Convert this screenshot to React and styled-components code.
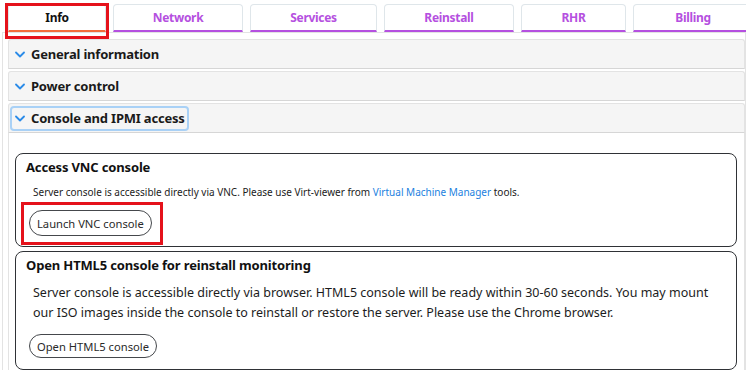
import React from 'react';
import styled, { createGlobalStyle } from 'styled-components';

const Global = createGlobalStyle`
  html, body { margin: 0; padding: 0; background: #fff; }
  body { font-family: "Noto Sans", "Open Sans", sans-serif; color: #1b1b1b; }
  * { box-sizing: border-box; }
`;

const Page = styled.div`
  width: 746px;
  height: 370px;
  overflow: hidden;
  padding-top: 4px;
`;

const TabBar = styled.div`
  display: flex;
  gap: 7px;
  padding-left: 8px;
  height: 28px;
`;

const Tab = styled.div`
  position: relative;
  flex: 0 0 ${p => p.w}px;
  height: 28px;
  border: 1px solid #dfe6ea;
  border-bottom: 2px solid ${p => (p.active ? '#f26c3b' : '#b550e0')};
  border-radius: 4px 4px 0 0;
  display: flex;
  align-items: center;
  justify-content: center;
  font-weight: 700;
  font-size: 12px;
  letter-spacing: -0.3px;
  color: ${p => (p.active ? '#111' : '#b550e0')};
  background: #fff;
  ${p => p.marked && `
    &::after {
      content: '';
      position: absolute;
      left: -4px;
      right: -4px;
      top: -2px;
      bottom: -9px;
      border: 3px solid #e5121b;
    }
  `}
`;

const Panel = styled.div`
  margin-left: 2px;
  border: 1px solid #e3e3e3;
  border-bottom: none;
  padding: 6px 0 0 5px;
  height: 340px;
  display: flex;
  flex-direction: column;
  gap: 2px;
`;

const Item = styled.div`
  display: flex;
  flex-direction: column;
`;

const Header = styled.div`
  height: 30px;
  background: #f5f5f5;
  border: 1px solid #e3e3e3;
  border-bottom-color: #d6d6d6;
  border-radius: 3px 3px 0 0;
  display: flex;
  align-items: center;
  padding-left: 1px;
`;

const HeaderButton = styled.div`
  display: flex;
  align-items: center;
  gap: 6px;
  height: 25px;
  padding: 0 2px 0 3px;
  border-radius: 4px;
  border: 2px solid ${p => (p.focused ? '#a9d1f6' : 'transparent')};
  font-weight: 700;
  font-size: 13px;
  letter-spacing: -0.2px;
  color: #1a1a1a;
`;

const Content = styled.div`
  border: 1px solid #e3e3e3;
  border-top: none;
  padding: 20px 7px 0 6px;
  display: flex;
  flex-direction: column;
  gap: 4px;
`;

const Card = styled.div`
  border: 1px solid #2f3236;
  border-radius: 8px;
  padding: 4px 10px ${p => p.pb}px 10px;
  display: flex;
  flex-direction: column;
  align-items: flex-start;
`;

const CardTitle = styled.div`
  font-weight: 700;
  font-size: 13px;
  letter-spacing: -0.15px;
  line-height: 18px;
  color: #111;
`;

const CardText = styled.p`
  margin: ${p => p.mt}px 0 0 7px;
  font-size: ${p => p.fs}px;
  line-height: ${p => p.lh}px;
  color: #1c1c1c;
`;

const Link = styled.a`
  color: #1b7fe0;
  text-decoration: none;
`;

const PillButton = styled.button`
  position: relative;
  margin: ${p => p.mt}px 0 0 3px;
  height: ${p => p.h}px;
  padding: 0 7px;
  border: 1px solid #45484c;
  border-radius: 14px;
  background: #fff;
  font-family: inherit;
  font-size: 11.2px;
  color: #2a2a2a;
  ${p => p.marked && `
    &::after {
      content: '';
      position: absolute;
      left: -9px;
      right: -12px;
      top: -9px;
      bottom: -10px;
      border: 3px solid #e5121b;
    }
  `}
`;

const Chevron = () => (
  <svg width="10" height="7" viewBox="0 0 10 7">
    <path d="M1 1.5 L5 5.5 L9 1.5" fill="none" stroke="#2b8be8" strokeWidth="1.8" strokeLinecap="round" strokeLinejoin="round" />
  </svg>
);

const tabs = [
  { label: 'Info', w: 98, active: true },
  { label: 'Network', w: 130 },
  { label: 'Services', w: 127 },
  { label: 'Reinstall', w: 130 },
  { label: 'RHR', w: 105 },
  { label: 'Billing', w: 120 },
];

export default function App() {
  return (
    <Page>
      <Global />
      <TabBar>
        {tabs.map(t => (
          <Tab key={t.label} w={t.w} active={t.active} marked={t.active}>{t.label}</Tab>
        ))}
      </TabBar>
      <Panel>
        <Item>
          <Header><HeaderButton><Chevron />General information</HeaderButton></Header>
        </Item>
        <Item>
          <Header><HeaderButton><Chevron />Power control</HeaderButton></Header>
        </Item>
        <Item>
          <Header><HeaderButton focused><Chevron />Console and IPMI access</HeaderButton></Header>
          <Content>
            <Card pb={10}>
              <CardTitle>Access VNC console</CardTitle>
              <CardText mt={8} fs={10} lh={16}>
                Server console is accessible directly via VNC. Please use Virt-viewer from <Link href="#">Virtual Machine Manager</Link> tools.
              </CardText>
              <PillButton mt={10} h={26} marked>Launch VNC console</PillButton>
            </Card>
            <Card pb={11}>
              <CardTitle>Open HTML5 console for reinstall monitoring</CardTitle>
              <CardText mt={9} fs={12.5} lh={20}>
                Server console is accessible directly via browser. HTML5 console will be ready within 30-60 seconds. You may mount our ISO images inside the console to reinstall or restore the server. Please use the Chrome browser.
              </CardText>
              <PillButton mt={11} h={24}>Open HTML5 console</PillButton>
            </Card>
          </Content>
        </Item>
      </Panel>
    </Page>
  );
}
